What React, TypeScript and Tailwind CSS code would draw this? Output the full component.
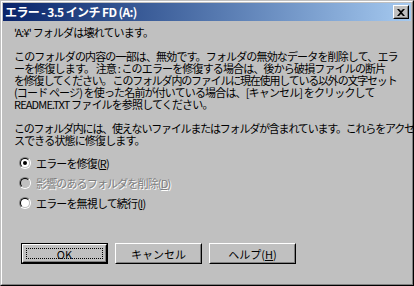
import React from 'react';

const font = { fontFamily: '"Noto Sans CJK JP", "Liberation Sans", sans-serif' };

function Radio({ checked, disabled }: { checked?: boolean; disabled?: boolean }) {
    return (
        <div className="w-3 h-3 rounded-full border border-t-[#808080] border-l-[#808080] border-b-white border-r-white shrink-0">
            <div
                className={`w-full h-full rounded-full border border-t-black border-l-black border-b-[#c0c0c0] border-r-[#c0c0c0] flex items-center justify-center ${
                    disabled ? 'bg-[#c0c0c0]' : 'bg-white'
                }`}
            >
                {checked && <div className="w-1 h-1 rounded-full bg-black" />}
            </div>
        </div>
    );
}

function Button({ children, isDefault }: { children: React.ReactNode; isDefault?: boolean }) {
    return (
        <div className={`w-[87px] h-[21px] ${isDefault ? 'border border-black' : ''}`}>
            <div className="w-full h-full border border-t-white border-l-white border-b-black border-r-black">
                <div className="w-full h-full border border-t-[#c0c0c0] border-l-[#c0c0c0] border-b-[#808080] border-r-[#808080] flex items-center justify-center">
                    {isDefault ? (
                        <div className="w-[calc(100%-4px)] h-[calc(100%-4px)] border border-dotted border-black flex items-center justify-center">
                            {children}
                        </div>
                    ) : (
                        children
                    )}
                </div>
            </div>
        </div>
    );
}

export default function App() {
    return (
        <div className="w-[414px] h-[286px] bg-[#c0c0c0] text-black" style={font}>
            <div className="w-full h-full border border-t-[#c0c0c0] border-l-[#c0c0c0] border-b-black border-r-black">
                <div className="w-full h-full border border-t-white border-l-white border-b-[#808080] border-r-[#808080] p-px flex flex-col">
                    {/* title bar */}
                    <div className="h-[18px] bg-gradient-to-r from-[#0a246a] to-[#a6caf0] flex items-center justify-between pl-[2px] pr-[2px]">
                        <span className="text-white text-[12px] font-bold leading-none tracking-[-0.6px] whitespace-pre">
                            エラー - 3.5 インチ FD (A:)
                        </span>
                        <div className="w-4 h-[14px] bg-[#c0c0c0] border border-t-white border-l-white border-b-black border-r-black">
                            <div className="w-full h-full border border-t-[#c0c0c0] border-l-[#c0c0c0] border-b-[#808080] border-r-[#808080] flex items-center justify-center">
                                <svg width="8" height="7" viewBox="0 0 8 7">
                                    <path d="M0 0h2l2 2 2-2h2L5 3.5 8 7H6L4 5 2 7H0l3-3.5z" fill="black" />
                                </svg>
                            </div>
                        </div>
                    </div>

                    {/* body */}
                    <div className="flex-1 flex flex-col pl-[11px] text-[11px] leading-[12px] tracking-[-0.85px] whitespace-nowrap">
                        <p className="mt-[5px]">'A:¥' フォルダは壊れています。</p>
                        <p className="mt-[12px]">
                            このフォルダの内容の一部は、無効です。フォルダの無効なデータを削除して、エラ
                            <br />
                            ーを修復します。 注意 : このエラーを修復する場合は、後から破損ファイルの断片
                            <br />
                            <span className="tracking-[-1.2px]">
                                を修復してください。 このフォルダ内のファイルに現在使用している以外の文字セット
                            </span>
                            <br />
                            (コード ページ) を使った名前が付いている場合は、[キャンセル] をクリックして
                            <br />
                            README.TXT ファイルを参照してください。
                        </p>
                        <p className="mt-[12px]">
                            <span className="tracking-[-1.2px]">
                                このフォルダ内には、使えないファイルまたはフォルダが含まれています。これらをアクセ
                            </span>
                            <br />
                            スできる状態に修復します。
                        </p>

                        <div className="mt-[7px] flex flex-col pl-[5px]">
                            <div className="h-5 flex items-center gap-[5px]">
                                <Radio checked />
                                <span>
                                    エラーを修復(<span className="underline">R</span>)
                                </span>
                            </div>
                            <div className="h-5 flex items-center gap-[5px]">
                                <Radio disabled />
                                <span className="text-[#808080] [text-shadow:1px_1px_0_#fff]">
                                    影響のあるフォルダを削除(<span className="underline">D</span>)
                                </span>
                            </div>
                            <div className="h-5 flex items-center gap-[5px]">
                                <Radio />
                                <span>
                                    エラーを無視して続行(<span className="underline">I</span>)
                                </span>
                            </div>
                        </div>

                        <div className="mt-[30px] flex gap-[7px] pl-[7px] tracking-normal">
                            <Button isDefault>OK</Button>
                            <Button>キャンセル</Button>
                            <Button>
                                <span>
                                    ヘルプ(<span className="underline">H</span>)
                                </span>
                            </Button>
                        </div>
                    </div>
                </div>
            </div>
        </div>
    );
}
